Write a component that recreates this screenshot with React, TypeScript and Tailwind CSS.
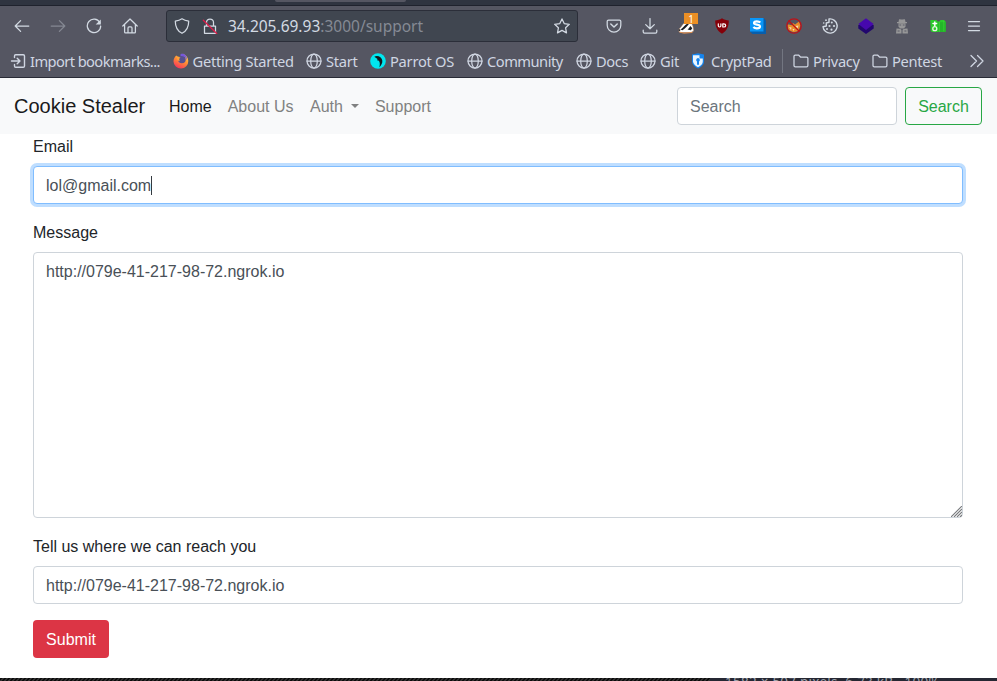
import type { ReactNode } from "react";

const noto = "font-['Noto_Sans',sans-serif]";

function Icon({ children, className = "w-4 h-4" }: { children: ReactNode; className?: string }) {
  return (
    <svg viewBox="0 0 16 16" className={`${className} shrink-0`} fill="none" stroke="currentColor" strokeWidth="1.25" strokeLinecap="round" strokeLinejoin="round">
      {children}
    </svg>
  );
}

const Globe = () => (
  <Icon>
    <circle cx="8" cy="8" r="7" />
    <ellipse cx="8" cy="8" rx="3.3" ry="7" />
    <path d="M1 8h14" />
  </Icon>
);

const Folder = () => (
  <Icon>
    <path d="M1 3.200c0-.8.4-1.200 1.200-1.200h3.300l2 2h6c.9 0 1.400.5 1.400 1.300v7.200c0 .9-.5 1.300-1.400 1.300H2.400c-.9 0-1.400-.4-1.400-1.300z" />
  </Icon>
);

const ImportIcon = () => (
  <Icon>
    <path d="M4.500 4.500V3c0-.8.5-1.200 1.200-1.200h7.500c.8 0 1.300.4 1.300 1.200v10c0 .8-.5 1.200-1.300 1.200H5.700c-.7 0-1.200-.4-1.200-1.200v-1.500M1.500 8H10M7.200 5.200 10 8l-2.800 2.800" strokeWidth="1.400" />
  </Icon>
);

const Firefox = () => (
  <Icon>
    <defs>
      <linearGradient id="flame" x1=".8" y1="0" x2=".3" y2="1">
        <stop offset="0" stopColor="#ffe14a" />
        <stop offset=".5" stopColor="#ff8a35" />
        <stop offset="1" stopColor="#f5315f" />
      </linearGradient>
    </defs>
    <path d="M3.200 2.400C1.500 3.800.5 6 .5 8.400A7.400 7.400 0 0 0 15.300 8C15.300 4.500 13 2 10 .8L7 4 4.500 3.500z" fill="url(#flame)" stroke="none" />
    <circle cx="8.900" cy="6.500" r="3.800" fill="#56508f" stroke="none" />
    <path d="M7.500 1.200C11-.3 14.500 2.700 13.800 7 13.200 4.500 11 2.800 7.500 3z" fill="#7657dd" stroke="none" />
    <path d="M3.800 3.500 7.500 4.600C6 5.500 6 6.500 6.800 8.300 5 8 3.500 6 3.800 3.500z" fill="#ffa436" stroke="none" />
  </Icon>
);

const Parrot = () => (
  <Icon>
    <circle cx="8" cy="8" r="7.800" fill="#00e6ee" stroke="none" />
    <path d="M4.300 3.700C7.500 1.800 11.800 4 12.300 7.500c.3 2.600-1 4.800-2.900 6.700.5-2.500.8-4.800-.5-6.500L7.100 7.300l.4-1.400z" fill="#11181d" stroke="none" />
  </Icon>
);

const CryptPad = () => (
  <Icon className="h-4 w-4 -ml-px mr-px">
    <path d="M2 1.500 8 .3l6 1.200v7c0 3-2.500 5.500-6 7-3.500-1.500-6-4-6-7z" fill="#1684ed" stroke="none" />
    <path d="M3 2.300h6.500v3.200h3.300v3.200c0 2.300-1.800 4-4.800 5.500-3-1.500-5-3.500-5-5.700z" fill="#e9f5ff" stroke="none" />
    <path d="M8 5a2 2 0 0 1 1 3.600v3.200H7V8.600A2 2 0 0 1 8 5z" fill="#1684ed" stroke="none" />
  </Icon>
);

const bookmarks: { label: string; icon: ReactNode; width: string; tracking: string }[] = [
  { label: "Import bookmarks...", icon: <ImportIcon />, width: "w-[162.500px]", tracking: "tracking-[-0.580px]" },
  { label: "Getting Started", icon: <Firefox />, width: "w-[133.500px]", tracking: "tracking-[-0.270px]" },
  { label: "Start", icon: <Globe />, width: "w-16", tracking: "tracking-[-0.250px]" },
  { label: "Parrot OS", icon: <Parrot />, width: "w-[97px]", tracking: "tracking-[-0.250px]" },
  { label: "Community", icon: <Globe />, width: "w-[109px]", tracking: "tracking-[-0.500px]" },
  { label: "Docs", icon: <Globe />, width: "w-16", tracking: "tracking-[-0.350px]" },
  { label: "Git", icon: <Globe />, width: "w-[51px]", tracking: "tracking-[-0.250px]" },
  { label: "CryptPad", icon: <CryptPad />, width: "w-[91px]", tracking: "tracking-[-0.330px]" },
];

function NavIcons() {
  return (
    <div className="flex h-8 w-[162px] items-center pl-1 text-[#d3dae3]">
      <span className="flex w-9 justify-center">
        <Icon><path d="M14.800 8H1.200M6.600 2.600 1.200 8l5.400 5.400" /></Icon>
      </span>
      <span className="flex w-9 justify-center text-[#858893]">
        <Icon><path d="M1.200 8h13.600M9.400 2.600 14.800 8l-5.400 5.400" /></Icon>
      </span>
      <span className="flex w-9 justify-center">
        <Icon>
          <path d="M13.800 4.500A6.700 6.700 0 1 0 14.700 8" />
          <path d="M14.800 1.400v5H9.700z" fill="currentColor" stroke="none" />
        </Icon>
      </span>
      <span className="flex w-9 justify-center">
        <Icon><path d="M.8 8 8 1l7.200 7M2.600 6.500V14c0 .6.300.9.900.9h9c.6 0 .9-.3.9-.9V6.500M6 14.800V10c0-.8.400-1.200 1-1.200h2c.6 0 1 .4 1 1.200v4.800" /></Icon>
      </span>
    </div>
  );
}

function AddressBar() {
  return (
    <div className={`flex h-8 w-[412px] items-center rounded-[3px] border border-[#2b2e39] bg-[#404650] px-[7px] text-[#d3dae3] ${noto}`}>
      <Icon><path d="M8 .8c2 1.300 4.300 2 6.700 2.400C14.700 9 12.700 13 8 15.300 3.300 13 1.300 9 1.300 3.200 3.700 2.800 6 2.100 8 .8z" /></Icon>
      <Icon className="ml-3 h-4 w-4">
        <path d="M2.500 8h11v7.300h-11zM4.500 8V4.500a3.500 3.500 0 0 1 7 0V8" />
        <path d="m1.300 2.300 13.400 13.200" stroke="#e01b49" strokeWidth="1.300" />
      </Icon>
      <span className="ml-[10px] flex-1 whitespace-pre text-[15.500px] leading-5">34.205.69.93<span className="text-[#858a94]">:3000/support</span></span>
      <Icon><path d="m8 .9 2.200 4.700 5.100.7-3.700 3.500.9 5.100L8 12.400l-4.500 2.500.9-5.100L.7 6.300l5.100-.7z" /></Icon>
    </div>
  );
}

function Extensions() {
  const slot = "flex w-9 justify-center";
  return (
    <div className="ml-[18px] flex items-center text-[#d3dae3]">
      <span className={slot}>
        <Icon>
          <path d="M2.500 2h11c.8 0 1.300.5 1.300 1.300v4A6.800 6.800 0 0 1 1.200 7.300v-4C1.200 2.500 1.700 2 2.500 2z" />
          <path d="M4.800 6 8 9l3.200-3" strokeWidth="1.500" />
        </Icon>
      </span>
      <span className={slot}>
        <Icon><path d="M8 .6v10M3.700 6.600 8 10.800l4.300-4.200M1.200 12.200v1.600c0 .9.500 1.400 1.300 1.400h11c.8 0 1.300-.5 1.300-1.400v-1.600" /></Icon>
      </span>
      <span className={`relative ${slot}`}>
        <Icon>
          <path d="M.4 12.300C1 10.500 3 9.500 4 7.500 5.500 5 8 3.200 11 3.500c2.500.5 4.500 4 4.700 9.500L13 14.500H2z" fill="#fff" stroke="#b07a50" strokeWidth=".5" />
          <path d="M2.500 11.500C5 10 6 7.500 9.500 5.500l1.300.8C9 8 7.500 10.500 4.500 12.200zM9.500 11.500c1.200-.8 2-2.200 2.800-3.500l2 2.300-1.500 2z" fill="#171b22" stroke="none" />
          <path d="M.5 11.300h1.700v1.600H.5z" fill="#171b22" stroke="none" />
          <path d="m2 14.200 4 1 8-.7" stroke="#de8d4f" strokeWidth="1" />
        </Icon>
        <span className={`absolute -top-[5px] right-[6px] flex h-[11px] w-[14px] items-center justify-center bg-[#eb8f25] text-[10px] leading-none text-white ${noto}`}>1</span>
      </span>
      <span className={slot}>
        <Icon>
          <path d="M8 .3c2 1.500 4.400 2 6.800 2.100 0 5.800-1.700 10-6.800 13.300C2.900 12.400 1.200 8.200 1.200 2.400 3.600 2.300 6 1.800 8 .3z" fill="#850009" stroke="none" />
          <path d="M4.300 5.800v2c0 .8.500 1.200 1.300 1.200s1.300-.4 1.300-1.200v-2M8.800 5.800V9h.9c1.300 0 2-.6 2-1.600s-.7-1.600-2-1.600z" stroke="#fff" strokeWidth="1.200" />
        </Icon>
      </span>
      <span className={slot}>
        <svg viewBox="0 0 16 16" className="h-4 w-4">
          <path d="M0 0h13.500L16 2.500V16H2.500L0 13.500z" fill="#075eac" />
          <path d="M0 0h13.500v13.500H0z" fill="#0996f8" />
          <path d="M10.300 4.500C9.500 3.600 8 3.300 6.700 3.300c-1.600 0-2.700.6-2.700 1.700 0 2.400 6 .9 6 3.500 0 1.200-1.300 1.800-3.100 1.800-1.400 0-2.700-.4-3.500-1.300" fill="none" stroke="#fff" strokeWidth="2.200" />
        </svg>
      </span>
      <span className={slot}>
        <Icon>
          <path d="M1.500 7c1-1.200 2.500.2 4 .2L7 5l2 1.500L13 3.500l1.500 4-2 5.500-5 1.200-5-2.200z" fill="#e98b2a" stroke="none" />
          <path d="m3 9 2.500.5L5 12zM9.500 8l3-.5-1 3zM6.500 11h2l-1 2z" fill="#f7ddb5" stroke="none" />
          <circle cx="8" cy="8" r="7.200" stroke="#bd1219" strokeWidth="1.300" />
          <path d="m3 3 10 10" stroke="#bd1219" strokeWidth="1.300" />
        </Icon>
      </span>
      <span className={slot}>
        <Icon>
          <path d="M7 1A7.100 7.100 0 1 1 1 8.700L4.300 8V5L7 4.300z" strokeWidth="1.400" />
          <g fill="currentColor" stroke="none">
            <circle cx="1.700" cy="5" r=".8" />
            <circle cx="4" cy="2.200" r=".9" />
            <circle cx="9.800" cy="4.500" r="1" />
            <circle cx="7.500" cy="8" r="1.100" />
            <circle cx="12" cy="8" r="1.100" />
            <circle cx="5" cy="11" r="1" />
            <circle cx="9.500" cy="11.700" r="1.100" />
          </g>
        </Icon>
      </span>
      <span className={slot}>
        <Icon>
          <path d="M.3 7v3.500L8 16l7.700-5.500V7z" fill="#22076e" stroke="none" />
          <path d="M8 .2 15.700 6 8 12 .3 6z" fill="#4608ad" stroke="none" />
        </Icon>
      </span>
      <span className={slot}>
        <Icon>
          <g fill="#969697" stroke="none">
            <path d="M5 1.500c1-.8 2 0 3 0s2-.8 3 0L11.500 4H13v1.300H3V4h1.500z" />
            <path d="M4.500 5.300h7v3.500L9.700 10.500H6.300L4.500 8.800zM2.500 10.500 6 10.800l1.500 1V15.500H2zM13.500 10.500l-3.500.3-1.500 1V15.500H14z" />
          </g>
          <path d="M5.800 7h1M9.200 7h1M4 13h1.200M10.800 13H12" stroke="#555662" strokeWidth=".9" />
        </Icon>
      </span>
      <span className={slot}>
        <Icon>
          <path d="M.3 2h6.200l1 1.500h2l1-1.500H14l1.700 1.800v9.700L14 14H2L.8 13z" fill="#2bca2b" stroke="none" />
          <path d="M8.500 4.200h7.200V14H8.500z" fill="#24b629" stroke="none" />
          <path d="M9.500 4v9.500M13.800 3v10" stroke="#45d640" strokeWidth=".6" />
          <path d="M4.800 4v3.500M3 5.500h3.600" stroke="#fff" strokeWidth="1.500" />
          <circle cx="4.800" cy="10.700" r="2" stroke="#e4f9df" strokeWidth="1.300" />
        </Icon>
      </span>
      <span className={slot}>
        <Icon><path d="M2.500 3.500h11M2.500 8h11M2.500 12.500h11" /></Icon>
      </span>
    </div>
  );
}

function Browser() {
  return (
    <header className={`flex h-[78px] shrink-0 flex-col bg-[#555662] ${noto}`}>
      <div className="h-[6px] shrink-0 border-b border-[#1f222d] bg-[#2f3440]">
        <div className="ml-[275px] h-[2px] w-[131px] rounded-b-[2px] bg-[#555662]" />
      </div>
      <div className="mt-1 flex h-8 shrink-0 items-center">
        <NavIcons />
        <div className="ml-1"><AddressBar /></div>
        <Extensions />
      </div>
      <div className="flex h-9 shrink-0 items-center border-b border-[#292b36] pl-[10px] pt-[5px] pb-[2px] text-[14.670px] text-[#d0d6e2]">
        {bookmarks.map((b) => (
          <div key={b.label} className={`flex shrink-0 items-center gap-1 whitespace-nowrap leading-5 ${b.width}`}>
            {b.icon}
            <span className={b.tracking}>{b.label}</span>
          </div>
        ))}
        <div className="h-6 w-px shrink-0 bg-[#737681]" />
        <div className="ml-[10px] flex w-[79px] shrink-0 items-center gap-1"><Folder /><span className="tracking-[-0.3px]">Privacy</span></div>
        <div className="flex w-[97px] shrink-0 items-center gap-1"><Folder /><span className="tracking-[-0.3px]">Pentest</span></div>
        <Icon><path d="m2 2.500 5.500 5.500L2 13.500M8.500 2.500 14 8l-5.500 5.500" /></Icon>
      </div>
    </header>
  );
}

function Navbar() {
  return (
    <nav className="flex h-14 shrink-0 items-center bg-[#f8f9fa] pl-[14px] pr-[15px] text-base text-[#808181]">
      <span className="w-[155px] text-xl leading-[30px] text-[#1a1a1b]">Cookie Stealer</span>
      <span className="pt-0.5 text-[#1a1a1b]">Home</span>
      <span className="ml-4 pt-0.5">About Us</span>
      <span className="ml-[16.500px] flex items-center pt-0.5">Auth<span className="-mt-[3px] ml-2 border-x-[4.800px] border-t-[4.800px] border-x-transparent border-t-[#808181]" /></span>
      <span className="ml-4 pt-0.5">Support</span>
      <input className="ml-auto h-[38px] w-[220px] rounded border border-[#ced4da] bg-white px-3 pt-0.5 placeholder:text-[#6c757d]" placeholder="Search" />
      <button className="ml-2 h-[38px] w-[77px] rounded border border-[#28a745] pt-0.5 text-[#28a745]">Search</button>
    </nav>
  );
}

function ResizeGrip() {
  return (
    <svg viewBox="0 0 11 11" className="pointer-events-none absolute bottom-[1px] right-[1px] h-[11px] w-[11px]" stroke="#77797c" strokeWidth="1.100">
      <path d="M0 11 11 0M3 11l8-8M6 11l5-5M9 11l2-2" />
    </svg>
  );
}

export default function App() {
  const field = "rounded border bg-white px-3 text-base leading-6 text-[#495057]";
  const label = "mb-[7px] pt-px leading-6";
  return (
    <div className="flex h-[681px] w-[997px] flex-col overflow-hidden bg-white font-['Liberation_Sans',Arial,sans-serif] text-base text-[#212529]">
      <Browser />
      <Navbar />
      <main className="flex h-[544px] shrink-0 flex-col pl-[33px] pr-[34px]">
        <label className={label}>Email</label>
        <div className={`${field} mb-4 flex h-[38px] shrink-0 items-center border-[#80bdff] pt-0.5 shadow-[0_0_0_3px_#bfdeff]`}>
          <span>lol@gmail.com</span>
          <span className="-mt-0.5 h-[19px] w-px bg-[#343a40]" />
        </div>
        <label className={label}>Message</label>
        <div className="relative mb-4 h-[266px] shrink-0">
          <textarea className={`${field} block h-full w-full resize-none border-[#ced4da] pb-[5px] pt-[7px]`} defaultValue="http://079e-41-217-98-72.ngrok.io" />
          <ResizeGrip />
        </div>
        <label className={label}>Tell us where we can reach you</label>
        <input className={`${field} mb-4 h-[38px] shrink-0 border-[#ced4da] pt-0.5`} defaultValue="http://079e-41-217-98-72.ngrok.io" />
        <button className="h-[38px] w-[76px] shrink-0 rounded bg-[#dc3545] pt-0.5 text-white">Submit</button>
      </main>
      <footer className={`flex h-[3px] shrink-0 overflow-hidden bg-[#252732] text-[13.500px] leading-[13px] text-[#9da2ac] ${noto}`}>
        <div className="h-[3px] w-[710px] shrink-0 bg-[repeating-linear-gradient(135deg,#0c0c0c_0px,#0c0c0c_1.500px,#302f2f_1.500px,#302f2f_2.830px)]" />
        <span className="-mt-[2px] ml-[15px] whitespace-pre tracking-[0.250px]">1582 × 507 pixels  6.73 kB   100%</span>
      </footer>
    </div>
  );
}
